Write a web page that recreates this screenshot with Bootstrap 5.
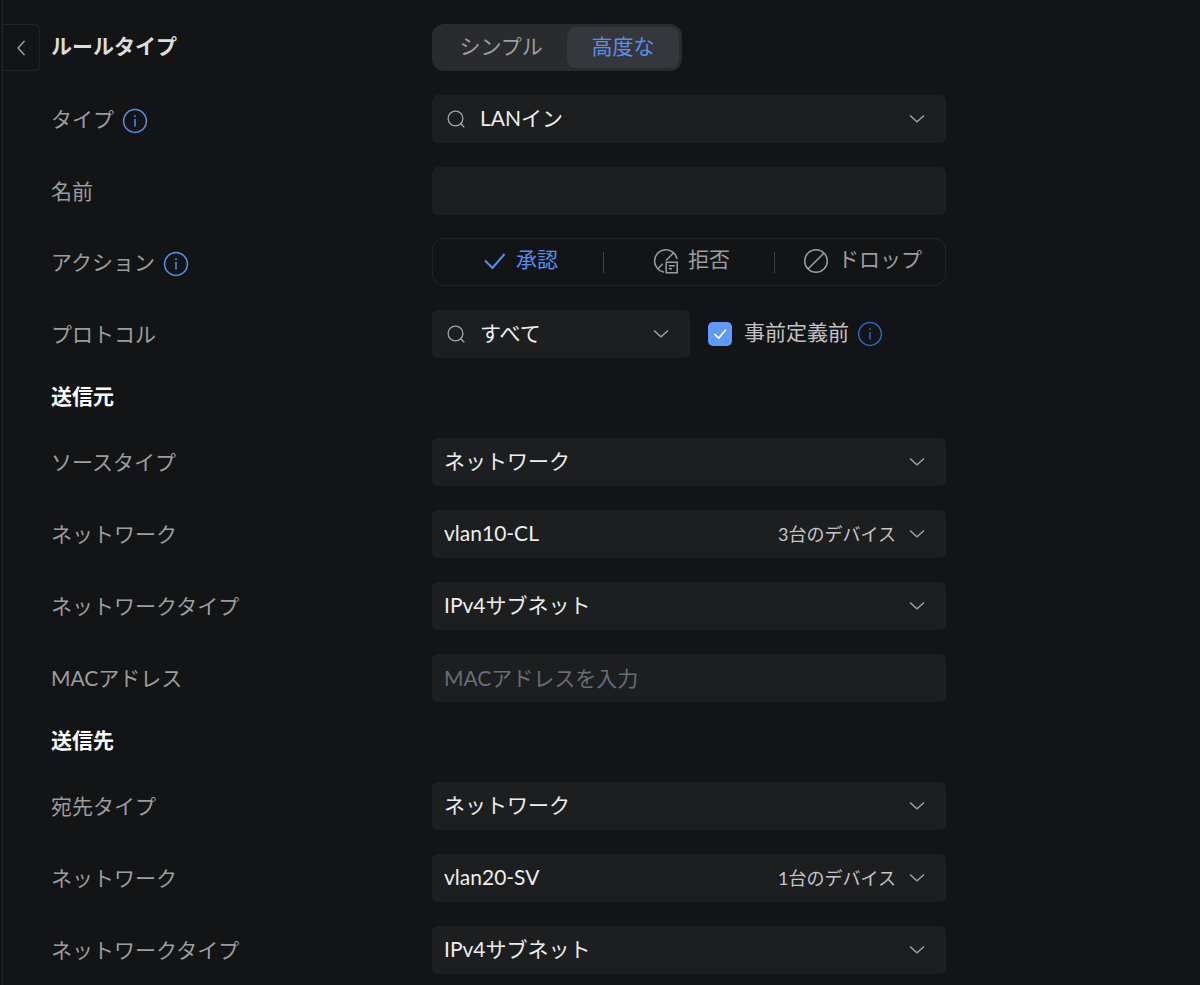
<!DOCTYPE html>
<html lang="ja" data-bs-theme="dark">
<head>
<meta charset="utf-8">
<meta name="viewport" content="width=device-width, initial-scale=1">
<title>ルールタイプ</title>
<link href="https://cdn.jsdelivr.net/npm/bootstrap@5.3.0/dist/css/bootstrap.min.css" rel="stylesheet">
<style>
:root { --page: #131416; --field: #1d1e20; --line: #232427; --accent: #588fee; --muted: #9c9d9f; --bright: #eeeeef; }
body { background: var(--page); color: var(--muted); font-family: Lato, "Noto Sans CJK JP", sans-serif; font-size: 21px; font-weight: 400; line-height: 28px; }
.panel { border-left: 1px solid var(--line); margin-left: 2px; min-height: 100vh; padding-top: 24px; }
.back-btn { width: 37px; height: 47px; border: 1px solid var(--line); border-left: 0; border-radius: 0 6px 6px 0; color: #a9aaac; background: transparent; }
.rule-form { margin-left: 11px; }
.form-line { display: grid; grid-template-columns: minmax(0, 381px) minmax(0, 514px); align-items: center; min-height: 48px; margin-bottom: 24px; }
.form-line.tabs-line { min-height: 47px; }
.form-line.name-line { margin-bottom: 23px; }
.title-text { color: #dcdcdd; font-weight: 700; }
.section-title { color: #fff; font-size: 21px; font-weight: 700; line-height: 28px; margin: 0; padding-bottom: 4px; }
svg { fill: none; stroke: currentColor; flex: none; display: block; }
.info-btn { color: var(--accent); }
.info-deep { color: #2a62d0; }
.tab-group { background: #2a2b2f; border-radius: 12px; padding: 3px; height: 47px; width: 250px; }
.tab-group label { border-radius: 9px; cursor: pointer; }
.tab-group .btn-check:checked + label { background: #35373c; color: var(--accent); }
.field-box { background-color: var(--field); border: 0; border-radius: 6px; color: var(--bright); font: inherit; height: 48px; line-height: 28px; padding: 9px 52px 11px 12px; }
.field-box:focus { background-color: var(--field); box-shadow: 0 0 0 1px var(--accent); }
select.field-box { appearance: none; outline: 0; }
.field-box::placeholder { color: #696c75; opacity: 1; }
.with-search .field-box { padding-left: 48px; }
.field-extra { position: absolute; top: 0; bottom: 0; pointer-events: none; display: flex; align-items: center; gap: 13px; color: #a3a4a6; }
.field-extra.at-end { right: 21px; }
.field-extra.at-start { left: 15px; }
.count-text { font-size: 18px; color: #c6c6c8; }
.action-group { border: 1px solid var(--line); border-radius: 12px; height: 48px; }
.action-group label { flex: 1 1 0; cursor: pointer; padding: 0 0 2px 5px; gap: 9px; }
.action-group .btn-check:checked + label { color: var(--accent); }
.action-group .vr { width: 1px; height: 18px; background: #414247; opacity: 1; align-self: center; }
.short-field { width: 258px; }
.pre-check.form-check-input { width: 24px; height: 24px; margin: 0 12px 0 18px; border: 0; border-radius: 5px; }
.pre-check.form-check-input:checked { background-color: #6099fb; background-image: url("data:image/svg+xml,%3csvg xmlns='http://www.w3.org/2000/svg' viewBox='0 0 24 24'%3e%3cpath d='M7 12.500l3.700 3.700L17.500 8' fill='none' stroke='%23fff' stroke-width='1.700' stroke-linecap='round' stroke-linejoin='round'/%3e%3c/svg%3e"); }
.pre-label { color: #c3c3c5; }
</style>
</head>
<body>
<svg class="d-none" aria-hidden="true">
  <symbol id="info" viewBox="0 0 26 26"><circle cx="13" cy="13" r="11.4" stroke-width="1.5"/><path d="M13 11v7.5M13 7.3v1.8" stroke-width="1.5"/></symbol>
  <symbol id="down" viewBox="0 0 16 16"><path d="M1 4.5l7 6.3 7-6.3" stroke-width="1.3"/></symbol>
  <symbol id="search" viewBox="0 0 18 18"><circle cx="8.500" cy="8.500" r="7.400" stroke-width="1.3"/><path d="M13.300 13.300l4 4" stroke-width="1.3"/></symbol>
</svg>
<main class="panel d-flex align-items-start">
  <button type="button" class="back-btn d-flex align-items-center justify-content-center p-0" aria-label="戻る">
    <svg width="10" height="16" viewBox="0 0 10 16"><path d="M8.5 1L2 8l6.500 7" stroke-width="1.3"/></svg>
  </button>
  <form class="rule-form flex-grow-1">
    <div class="form-line tabs-line">
      <span class="title-text pb-1" id="ruleType">ルールタイプ</span>
      <div class="tab-group d-flex" role="radiogroup" aria-labelledby="ruleType">
        <input class="btn-check" type="radio" name="mode" id="modeSimple">
        <label class="d-flex align-items-center justify-content-center flex-fill pb-1" for="modeSimple">シンプル</label>
        <input class="btn-check" type="radio" name="mode" id="modeAdv" checked>
        <label class="d-flex align-items-center justify-content-center flex-fill pb-1" for="modeAdv">高度な</label>
      </div>
    </div>

    <div class="form-line">
      <div class="d-flex align-items-center gap-2"><label for="type">タイプ</label><button type="button" class="btn p-0 border-0 info-btn pt-1" aria-label="タイプの情報"><svg width="26" height="26"><use href="#info"/></svg></button></div>
      <div class="position-relative with-search">
        <span class="field-extra at-start"><svg width="18" height="18"><use href="#search"/></svg></span>
        <select class="field-box w-100" id="type"><option>LANイン</option></select>
        <span class="field-extra at-end"><svg width="16" height="16"><use href="#down"/></svg></span>
      </div>
    </div>

    <div class="form-line name-line">
      <label for="name">名前</label>
      <input type="text" class="form-control field-box" id="name">
    </div>

    <div class="form-line">
      <div class="d-flex align-items-center gap-2"><span id="action">アクション</span><button type="button" class="btn p-0 border-0 info-btn pt-1" aria-label="アクションの情報"><svg width="26" height="26"><use href="#info"/></svg></button></div>
      <div class="action-group d-flex" role="radiogroup" aria-labelledby="action">
        <input class="btn-check" type="radio" name="action" id="accept" checked>
        <label class="d-flex align-items-center justify-content-center" for="accept"><svg width="24" height="24" viewBox="0 0 24 24"><path d="M2 11.500l7.500 7.500L21.500 5" stroke-width="2"/></svg><span class="pb-1">承認</span></label>
        <span class="vr"></span>
        <input class="btn-check" type="radio" name="action" id="reject">
        <label class="d-flex align-items-center justify-content-center" for="reject"><svg width="26" height="26" viewBox="0 0 26 26" stroke-width="1.5"><path d="M11 24.200A11.300 11.300 0 1 1 24 11M20.500 5l-7.500 7.500M9.800 15.700L5.200 20.500M13.200 14.200h11v10.600h-11zM15.800 17.700h6M15.800 20.700h3.200"/></svg><span class="pb-1">拒否</span></label>
        <span class="vr"></span>
        <input class="btn-check" type="radio" name="action" id="drop">
        <label class="d-flex align-items-center justify-content-center" for="drop"><svg width="26" height="26" viewBox="0 0 26 26" stroke-width="1.5"><circle cx="13" cy="13" r="11.300"/><path d="M21 5L5 21"/></svg><span class="pb-1">ドロップ</span></label>
      </div>
    </div>

    <div class="form-line">
      <label for="protocol">プロトコル</label>
      <div class="d-flex align-items-center">
        <div class="position-relative with-search short-field">
          <span class="field-extra at-start"><svg width="18" height="18"><use href="#search"/></svg></span>
          <select class="field-box w-100" id="protocol"><option>すべて</option></select>
          <span class="field-extra at-end"><svg width="16" height="16"><use href="#down"/></svg></span>
        </div>
        <input class="form-check-input pre-check" type="checkbox" id="pre" checked>
        <label class="pre-label pb-1" for="pre">事前定義前</label>
        <button type="button" class="btn p-0 border-0 info-deep ms-2" aria-label="事前定義前の情報"><svg width="26" height="26"><use href="#info"/></svg></button>
      </div>
    </div>

    <h2 class="section-title">送信元</h2>
    <div class="form-line mt-4">
      <label for="srcType">ソースタイプ</label>
      <div class="position-relative">
        <select class="field-box w-100" id="srcType"><option>ネットワーク</option></select>
        <span class="field-extra at-end"><svg width="16" height="16"><use href="#down"/></svg></span>
      </div>
    </div>
    <div class="form-line">
      <label for="srcNet">ネットワーク</label>
      <div class="position-relative">
        <select class="field-box w-100" id="srcNet"><option>vlan10-CL</option></select>
        <span class="field-extra at-end"><span class="count-text">3台のデバイス</span><svg width="16" height="16"><use href="#down"/></svg></span>
      </div>
    </div>
    <div class="form-line">
      <label for="srcNetType">ネットワークタイプ</label>
      <div class="position-relative">
        <select class="field-box w-100" id="srcNetType"><option>IPv4サブネット</option></select>
        <span class="field-extra at-end"><svg width="16" height="16"><use href="#down"/></svg></span>
      </div>
    </div>
    <div class="form-line">
      <label for="mac">MACアドレス</label>
      <input type="text" class="form-control field-box" id="mac" placeholder="MACアドレスを入力">
    </div>

    <h2 class="section-title">送信先</h2>
    <div class="form-line mt-4">
      <label for="dstType">宛先タイプ</label>
      <div class="position-relative">
        <select class="field-box w-100" id="dstType"><option>ネットワーク</option></select>
        <span class="field-extra at-end"><svg width="16" height="16"><use href="#down"/></svg></span>
      </div>
    </div>
    <div class="form-line">
      <label for="dstNet">ネットワーク</label>
      <div class="position-relative">
        <select class="field-box w-100" id="dstNet"><option>vlan20-SV</option></select>
        <span class="field-extra at-end"><span class="count-text">1台のデバイス</span><svg width="16" height="16"><use href="#down"/></svg></span>
      </div>
    </div>
    <div class="form-line mb-0">
      <label for="dstNetType">ネットワークタイプ</label>
      <div class="position-relative">
        <select class="field-box w-100" id="dstNetType"><option>IPv4サブネット</option></select>
        <span class="field-extra at-end"><svg width="16" height="16"><use href="#down"/></svg></span>
      </div>
    </div>
  </form>
</main>
<script src="https://cdn.jsdelivr.net/npm/bootstrap@5.3.0/dist/js/bootstrap.bundle.min.js"></script>
</body>
</html>
